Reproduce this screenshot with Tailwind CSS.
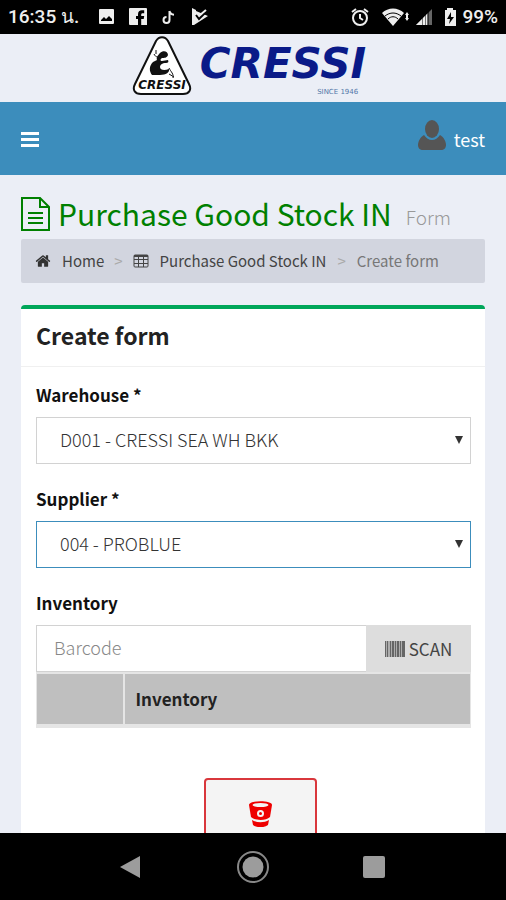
<!DOCTYPE html>
<html lang="en">
<head>
    <meta charset="UTF-8">
    <meta name="viewport" content="width=device-width, initial-scale=1.0">
    <title>Purchase Good Stock IN - Create form</title>
    <script src="https://cdn.jsdelivr.net/npm/@tailwindcss/browser@4"></script>
</head>
<body class="flex h-screen flex-col overflow-hidden bg-[#ebeef6] font-['Noto_Sans_CJK_SC',sans-serif] text-base text-[#333]">

    <!-- Status bar -->
    <div class="flex h-[34px] shrink-0 items-center bg-black px-2 font-[Roboto,'Noto_Sans',sans-serif] text-[19px] font-medium text-[#eee]">
        <span>16:35 น.</span>
        <div class="ml-[18px] flex items-center gap-[11px]">
            <svg class="h-5 w-5" viewBox="0 0 20 20"><path fill="#eee" fill-rule="evenodd" d="M3 2h13a1 1 0 0 1 1 1v13a1 1 0 0 1-1 1H3a1 1 0 0 1-1-1V3a1 1 0 0 1 1-1zM4 14h11v-2l-3-3-3 3-2-2-3 3z"/></svg>
            <svg class="h-5 w-5" viewBox="0 0 20 20"><path fill="#eee" d="M2 1h16a1 1 0 0 1 1 1v16H2a1 1 0 0 1-1-1V2a1 1 0 0 1 1-1z"/><path fill="#000" d="M10 18v-6H8V9h2V7.500c0-2.800 1.500-4.200 4-4.200h2.200v2.900h-1.500c-1.200 0-1.500.6-1.500 1.500V9h3l-.5 3h-2.500v6z"/></svg>
            <svg class="h-5 w-5" viewBox="0 0 20 20" fill="none" stroke="#eee" stroke-width="2"><path d="M10.500 4v9a3 3 0 1 1-3-3M10.500 4c.5 2.500 2 3.500 4.500 3.700"/></svg>
            <svg class="h-5 w-5" viewBox="0 0 20 20"><path fill="#eee" d="M2 1l4 2v1l12 5-14 9H2z"/><path fill="none" stroke="#000" stroke-width="2" d="M6 8l3 4 8-8"/><path fill="none" stroke="#eee" stroke-width="2" d="M10 8l6-5"/></svg>
        </div>
        <div class="ml-auto flex items-center gap-1">
            <svg class="mr-2 h-5 w-5" viewBox="0 0 20 20" fill="none" stroke="#eee" stroke-width="2"><circle cx="10" cy="11" r="7"/><path d="M10 7v4l3 2M2 5l4-3M18 5l-4-3"/></svg>
            <svg class="h-5 w-7" viewBox="0 0 28 20"><path fill="#eee" d="M0 6C6 0 16 0 22 6L11 19z"/><path fill="none" stroke="#000" d="M3 9c5-4 11-4 16 0M6 12c3-3 7-3 10 0"/><path fill="#eee" d="M25 5l2 3h-1v3h1l-2 3-2-3h1V8h-1z"/></svg>
            <svg class="h-5 w-5" viewBox="0 0 20 20"><path fill="#666" d="M2 18L18 2v16z"/><path fill="#eee" d="M2 18L13 7v11z"/><path stroke="#000" d="M8.500 8v10M11.500 6v12M14.500 4v14" opacity=".5"/></svg>
            <svg class="ml-1 h-5 w-4" viewBox="0 0 16 20"><path fill="#eee" d="M5 1h6v2h3v16H3V3h2z"/><path fill="#000" d="M9 5l-4 7h3l-1 5 5-7H9z"/></svg>
            <span>99%</span>
        </div>
    </div>

    <!-- Logo -->
    <header class="shrink-0">
        <a href="#" aria-label="Cressi" class="flex h-[68px] items-center justify-center gap-2 pr-2 pb-1">
            <svg class="h-[60px] w-[60px]" viewBox="0 0 60 60">
                <path d="M24 5c3-5 9-5 12 0l21 43c3 6 0 10-6 10H9c-6 0-9-4-6-10z" fill="#fff" stroke="#111" stroke-width="2"/>
                <path fill="#111" d="M28 17c3-3 8-2 8 2-1 3-4 3-6 3-2 1-2 3 0 3l6-1c1 2 0 3-2 3-4 0-6 2-6 4 0 3 4 4 9 2 1 3-3 6-9 6h-8c-3-4-3-9 1-13l4-2c-1-2 1-5 3-7z"/>
                <path fill="none" stroke="#111" d="M22 18c1 2 2 3 4 3M37 32c2 4 5 6 4 10M24 18v-4M37 38l5 3"/>
                <text x="30" y="53" text-anchor="middle" fill="#111" font-family="DejaVu Sans" font-size="12" font-weight="bold" font-style="italic">CRESSI</text>
            </svg>
            <span class="flex flex-col items-end pt-1 font-['DejaVu_Sans',sans-serif]">
                <span class="text-[42px] leading-[48px] font-bold text-[#0a1a88] italic">CRESSI</span>
                <span class="mr-2 text-[7px] leading-2 text-[#5277a8]">SINCE 1946</span>
            </span>
        </a>
        <nav class="flex h-[73px] items-center justify-between bg-[#3c8dbc] px-[21px] text-white">
            <button type="button" aria-label="Toggle navigation">
                <svg class="h-[18px] w-[18px]" viewBox="0 0 18 18" fill="#fff"><path d="M0 2h18v3H0zM0 8h18v3H0zM0 14h18v3H0z"/></svg>
            </button>
            <a href="#" class="flex items-center gap-2 text-lg">
                <svg class="mb-2 h-8 w-7" viewBox="0 0 28 32" fill="#555"><ellipse cx="14" cy="10" rx="7" ry="9"/><path d="M6 16c2 3 5 5 8 5s6-2 8-5c4 2 6 7 6 10s-2 5-5 5H5c-3 0-5-2-5-5s2-8 6-10z"/></svg>
                test
            </a>
        </nav>
    </header>

    <main class="min-h-0 flex-1 overflow-hidden px-[21px] pt-4">
        <h1 class="flex h-12 items-start text-[30px] leading-[44px] text-[#008000]">
            <svg class="mt-[6px] mr-2 h-[34px] w-[29px]" viewBox="0 0 29 34" fill="none" stroke="#008000" stroke-width="2"><path d="M1 1h18l9 9v23H1zM19 1v9h9M7 16h15M7 21h15M7 26h15"/></svg>
            Purchase Good Stock IN
            <small class="ml-[14px] pt-1 text-[19px] leading-[44px] font-light text-[#999]">Form</small>
        </h1>

        <ol class="flex h-11 items-center rounded-xs bg-[#d2d5df] px-[14px] text-[15px] text-[#444]">
            <li class="flex items-center">
                <svg class="mr-[11px] h-4 w-4" viewBox="0 0 1792 1792" fill="#333"><path d="M1472 992v480q0 26-19 45t-45 19h-384v-384h-256v384h-384q-26 0-45-19t-19-45v-480q0-1 .5-3t.5-3l575-474 575 474q1 2 1 6zm223-69l-62 74q-8 9-21 11h-3q-13 0-21-7l-692-577-692 577q-12 8-24 7-13-2-21-11l-62-74q-8-10-7-23.500t11-21.500l719-599q32-26 76-26t76 26l244 204v-195q0-14 9-23t23-9h192q14 0 23 9t9 23v408l219 182q10 8 11 21.500t-7 23.500z"/></svg>
                <a href="#">Home</a>
            </li>
            <li class="flex items-center">
                <span class="px-[10px] text-[#aaa]">&gt;</span>
                <svg class="mr-[11px] h-4 w-4" viewBox="0 0 16 16" fill="none" stroke="#444"><rect x="1" y="2" width="14" height="12" rx="1"/><path d="M1 3h14" stroke-width="2"/><path d="M1 6.500h14M1 10.500h14M5.500 3v11M10.500 3v11"/></svg>
                <a href="#">Purchase Good Stock IN</a>
            </li>
            <li class="text-[#777]"><span class="px-[11px] text-[#aaa]">&gt;</span>Create form</li>
        </ol>

        <section class="mt-[22px] rounded-t border-t-4 border-[#00a65a] bg-white">
            <h2 class="border-b border-[#f0f0f0] px-[15px] pt-2 pb-3 text-[23px] leading-[37px] font-bold text-[#222]">Create form</h2>
            <form class="pt-4 pr-[14px] pb-10 pl-[15px]">
                <label for="warehouse" class="block text-[17px] leading-6 font-bold text-[#111]">Warehouse *</label>
                <div class="relative mt-[10px]">
                    <select id="warehouse" class="h-[47px] w-full appearance-none border border-[#d2d2d2] bg-white px-[23px] pb-[3px] text-lg font-light text-[#333]">
                        <option>D001 - CRESSI SEA WH BKK</option>
                    </select>
                    <svg class="pointer-events-none absolute top-[19px] right-2 h-2 w-2" viewBox="0 0 8 8"><path d="M0 0h8L4 8z" fill="#333"/></svg>
                </div>

                <label for="supplier" class="mt-[23px] block text-[17px] leading-6 font-bold text-[#111]">Supplier *</label>
                <div class="relative mt-[10px]">
                    <select id="supplier" class="h-[47px] w-full appearance-none border border-[#3c8dbc] bg-white px-[23px] pb-[3px] text-lg font-light text-[#333]">
                        <option>004 - PROBLUE</option>
                    </select>
                    <svg class="pointer-events-none absolute top-[19px] right-2 h-2 w-2" viewBox="0 0 8 8"><path d="M0 0h8L4 8z" fill="#333"/></svg>
                </div>

                <label for="barcode" class="mt-[23px] block text-[17px] leading-6 font-bold text-[#111]">Inventory</label>
                <div class="mt-[10px] flex h-[47px]">
                    <input type="text" id="barcode" placeholder="Barcode" class="min-w-0 flex-1 border border-r-0 border-[#d2d2d2] px-[17px] pb-[3px] text-lg font-light placeholder:text-[#888]">
                    <button type="button" class="flex w-[105px] items-center justify-center gap-1 bg-[#ddd] text-[17px] text-[#444]">
                        <svg class="h-4 w-5" viewBox="0 0 20 16" fill="#666"><path d="M0 0h20v16H0z" opacity=".4"/><path d="M0 0h1v16H0zM2 0h1v16H2zM5 0h1v16H5zM7 0h2v16H7zM10 0h1v16h-1zM12 0h2v16h-2zM15 0h1v16h-1zM17 0h3v16h-3z"/></svg>
                        SCAN
                    </button>
                </div>
                <table class="w-full border border-t-2 border-b-4 border-[#e5e5e5] text-left text-[17px] text-[#222]">
                    <thead class="bg-[#bfbfbf]">
                        <tr>
                            <th class="h-[53px] w-[87px] border-r-2 border-[#e5e5e5]"></th>
                            <th class="px-[11px] font-bold">Inventory</th>
                        </tr>
                    </thead>
                </table>

                <div class="flex justify-center pt-[50px] pl-[14px]">
                    <button type="button" aria-label="Clear" class="flex h-20 w-[113px] justify-center rounded border-2 border-[#d9373c] bg-[#f4f4f4] pt-[21px]">
                        <svg class="h-[26px] w-[23px]" viewBox="0 0 23 26"><path fill="#e00" d="M0 4c0-5 23-5 23 0l-2 12c-4 4-15 4-19 0z"/><path fill="#e00" d="M3 19c5 3 12 3 17 0l-1 5c-4 3-11 3-15 0z"/><ellipse cx="11.500" cy="4" rx="8" ry="2" fill="#f4f4f4"/><circle cx="11.500" cy="12.500" r="2.500" fill="none" stroke="#f4f4f4" stroke-width="2"/></svg>
                    </button>
                </div>
            </form>
        </section>
    </main>

    <!-- System navigation -->
    <footer class="grid h-[67px] shrink-0 grid-cols-[1fr_auto_1fr] items-center bg-black">
        <button type="button" aria-label="Back" class="mr-24 justify-self-end">
            <svg class="h-6 w-[22px]" viewBox="0 0 22 24"><path d="M1 12L21 1v22z" fill="#9c9c9c"/></svg>
        </button>
        <button type="button" aria-label="Home">
            <svg class="h-8 w-8" viewBox="0 0 32 32"><circle cx="16" cy="16" r="15" fill="none" stroke="#888" stroke-width="2"/><circle cx="16" cy="16" r="10.500" fill="#9c9c9c"/></svg>
        </button>
        <button type="button" aria-label="Recent apps" class="ml-[94px] justify-self-start">
            <svg class="h-[22px] w-[22px]" viewBox="0 0 22 22"><rect width="22" height="22" rx="2" fill="#9c9c9c"/></svg>
        </button>
    </footer>

</body>
</html>
